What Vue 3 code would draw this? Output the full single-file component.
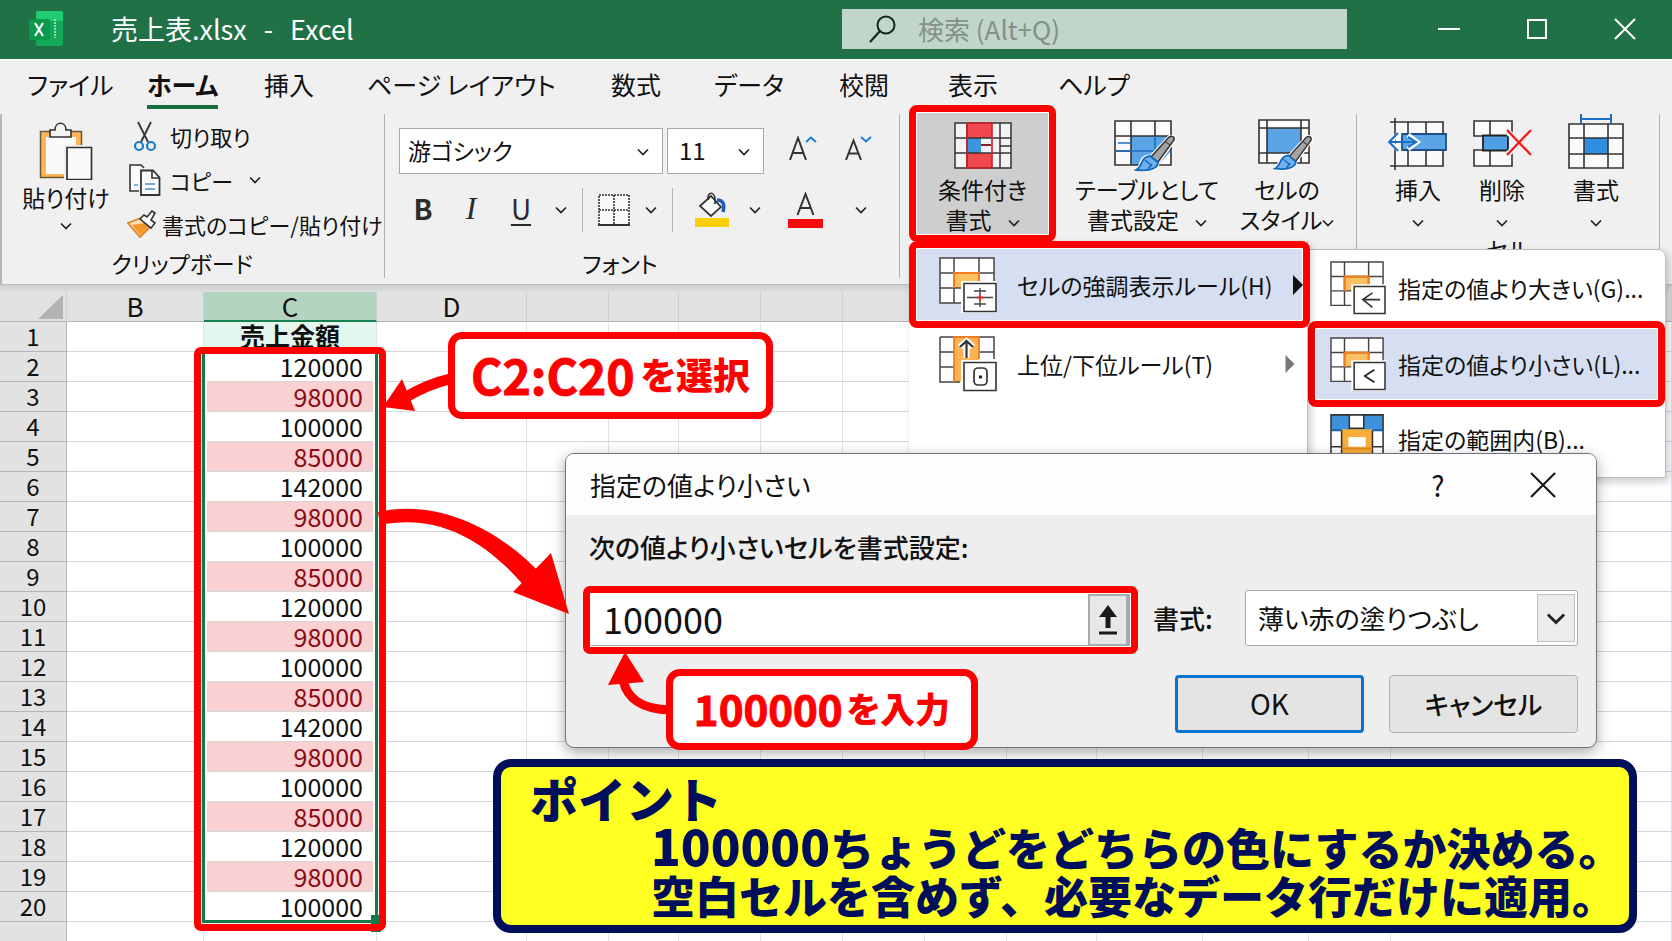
<script setup>
import { ref } from 'vue'

const tabs = ['ファイル', 'ホーム', '挿入', 'ページ レイアウト', '数式', 'データ', '校閲', '表示', 'ヘルプ']
const activeTab = ref('ホーム')

const amounts = [
  120000, 98000, 100000, 85000, 142000, 98000, 100000, 85000, 120000, 98000,
  100000, 85000, 142000, 98000, 100000, 85000, 120000, 98000, 100000,
]
const limit = ref('100000')
const fontName = ref('游ゴシック')
const fontSize = ref('11')
const fillStyle = ref('薄い赤の塗りつぶし')
const restColumns = 11
const isLow = (n) => n < Number(limit.value)
</script>

<template>
  <div class="app">
    <svg class="defs" aria-hidden="true">
      <symbol id="chev" viewBox="0 0 12 8"><path d="M1 1.5 6 6.5 11 1.5" fill="none" stroke="#222" stroke-width="1.7" /></symbol>
      <symbol id="brush" viewBox="0 0 42 37">
        <path d="M36 1.5c3-1.5 5 .5 4 3.500L24 27l-7-5z" fill="#a3a3a3" stroke="#fff" stroke-width="4" />
        <path d="M15 21l9 7c0 6-8 9-22 7.500 6-3 3-14 13-14.500z" fill="#6fb1ea" stroke="#fff" stroke-width="3" />
        <path d="M35 2c3-2 6 0 5 3L24 27l-7-5z" fill="#a3a3a3" stroke="#333" stroke-width="1.500" />
        <path d="M31 6.500l6 4" stroke="#444" stroke-width="1.200" />
        <path d="M16 21l8 6.500c0 6-9 9-22 7.500 7-3 4-13 14-14z" fill="#6fb1ea" stroke="#1467bd" stroke-width="1.800" />
        <path d="M11 25l7 6M14 34l4-5" stroke="#1467bd" stroke-width="1.400" fill="none" />
      </symbol>
      <symbol id="grid-orange" viewBox="0 0 58 56">
        <path d="M1 1h54v45H1z" fill="#fff" />
        <path d="M15 16h25v15H15z" fill="#fcc064" />
        <path d="M1 1h54v45H1zM15 1v45M40 1v45M1 16h54M1 31h54" fill="none" stroke="#444" stroke-width="1.500" />
        <path d="M15 31V16h25v10" fill="none" stroke="#f07c1e" stroke-width="2" />
        <path d="M22 24h36v32H22z" fill="#fff" />
        <path d="M25 26.500h32v28H25z" fill="#fff" stroke="#333" stroke-width="1.600" />
      </symbol>
    </svg>

    <header class="titlebar">
      <div class="brand">
        <svg class="logo" width="34" height="36" viewBox="0 0 34 36">
          <rect x="7" y="0" width="27" height="35" rx="2" fill="#13a85a" />
          <path d="M9 0h23a2 2 0 0 1 2 2v8H7V2a2 2 0 0 1 2-2z" fill="#22cc72" />
          <rect x="0" y="8" width="21" height="21" rx="2" fill="#0b9a4c" />
          <path d="M6 12l8 13M14 12 6 25" stroke="#fff" stroke-width="2.200" />
          <path d="M26 8v19" stroke="#8fe0b4" stroke-width="2" stroke-dasharray="2 1" />
        </svg>
        <h1><span>売上表.xlsx</span><span>-</span><span>Excel</span></h1>
      </div>
      <label class="search">
        <svg width="30" height="30" viewBox="0 0 30 30">
          <circle cx="18" cy="11" r="8.500" fill="none" stroke="#11291c" stroke-width="2" />
          <path d="M12 17 2 28" stroke="#11291c" stroke-width="2.200" />
        </svg>
        <input type="search" placeholder="検索 (Alt+Q)" aria-label="検索" />
      </label>
      <div class="window-buttons">
        <button type="button" aria-label="最小化"><svg width="24" height="24" viewBox="0 0 24 24"><path d="M1 12h22" stroke="#fff" stroke-width="2" /></svg></button>
        <button type="button" aria-label="最大化"><svg width="24" height="24" viewBox="0 0 24 24"><path d="M3 3h18v18H3z" fill="none" stroke="#fff" stroke-width="2" /></svg></button>
        <button type="button" aria-label="閉じる"><svg width="24" height="24" viewBox="0 0 24 24"><path d="M2 2l20 20M22 2 2 22" stroke="#fff" stroke-width="2" /></svg></button>
      </div>
    </header>

    <nav class="tabs">
      <button v-for="t in tabs" :key="t" type="button" :class="{ active: t === activeTab }" @click="activeTab = t">{{ t }}</button>
    </nav>

    <section class="ribbon">
      <div class="group clipboard">
        <div class="group-body">
          <button class="paste" type="button">
            <svg width="54" height="58" viewBox="0 0 54 58">
              <path d="M1.500 9.500h41v46h-41z" fill="#fdb557" stroke="#6b5636" stroke-width="1.500" />
              <path d="M7 15h30v37H7z" fill="#fafafa" />
              <path d="M11 15V8h5c0-9 11-9 11 0h5v7z" fill="#f4f4f4" stroke="#333" stroke-width="1.600" />
              <path d="M25 23h29v35H25z" fill="#f0f0f0" />
              <path d="M28 25.500h24.500v32H28z" fill="#fafafa" stroke="#333" stroke-width="1.700" />
            </svg>
            <span>貼り付け</span>
            <svg class="chev"><use href="#chev" /></svg>
          </button>
          <div class="clip-list">
            <button type="button">
              <svg width="43" height="32" viewBox="0 0 43 32">
                <path d="M11 2l10 20M24 2 14 22" stroke="#333" stroke-width="1.800" />
                <circle cx="12" cy="26" r="4" fill="none" stroke="#1b78d0" stroke-width="2.200" />
                <circle cx="24" cy="26" r="4" fill="none" stroke="#1b78d0" stroke-width="2.200" />
              </svg>切り取り
            </button>
            <button type="button">
              <svg width="43" height="32" viewBox="0 0 43 32">
                <path d="M12 27H3V1h11l3 3" fill="#fafafa" stroke="#333" stroke-width="1.600" />
                <path d="M14 6.500h12l6.500 7V31H14z" fill="#fafafa" stroke="#333" stroke-width="1.800" />
                <path d="M25 6v8h8" fill="none" stroke="#333" stroke-width="1.600" />
                <path d="M18 20h10M18 25h10" stroke="#4a90c8" stroke-width="1.500" />
                <path d="M7 21h4" stroke="#7bb8e0" stroke-width="2" />
              </svg>コピー<svg class="chev after"><use href="#chev" /></svg>
            </button>
            <button type="button">
              <svg width="35" height="28" viewBox="0 0 35 28">
                <path d="M1 13l13-5 9 9-10 10z" fill="#fbe0bb" stroke="#e08420" stroke-width="1.800" />
                <path d="M5 15l8 10 9-8-4-4z" fill="#f4962c" />
                <path d="M13 9l4-4 3 2 5-6 3 2-4 7 4 3-4 5z" fill="#fff" stroke="#333" stroke-width="1.600" />
              </svg>書式のコピー/貼り付け
            </button>
          </div>
        </div>
        <div class="group-label">クリップボード</div>
      </div>

      <div class="group font">
        <div class="group-body">
          <div class="font-row">
            <div class="pick name"><select v-model="fontName" aria-label="フォント"><option>游ゴシック</option></select><svg class="chev"><use href="#chev" /></svg></div>
            <div class="pick size"><select v-model="fontSize" aria-label="フォント サイズ"><option>11</option></select><svg class="chev"><use href="#chev" /></svg></div>
            <div class="grow-buttons">
              <button type="button" aria-label="フォント サイズの拡大">
                <svg width="30" height="26" viewBox="0 0 30 26"><path d="M2 24 10 2l8 22M5 17h10" fill="none" stroke="#333" stroke-width="2" /><path d="M18 6l5-4.500L28 6" fill="none" stroke="#1b7fd8" stroke-width="2" /></svg>
              </button>
              <button type="button" aria-label="フォント サイズの縮小">
                <svg width="30" height="26" viewBox="0 0 30 26"><path d="M2 24 9.500 4.500l7.500 19.500M5 17.500h9" fill="none" stroke="#333" stroke-width="2" /><path d="M17 1l5 4.500L27 1" fill="none" stroke="#1b7fd8" stroke-width="2" /></svg>
              </button>
            </div>
          </div>
          <div class="style-row">
            <button class="bold" type="button">B</button>
            <button class="italic" type="button">I</button>
            <button class="under" type="button">U</button>
            <button type="button" aria-label="下線の種類"><svg class="chev"><use href="#chev" /></svg></button>
            <i class="rule"></i>
            <button type="button" aria-label="罫線">
              <svg width="32" height="32" viewBox="0 0 32 32"><path d="M1 1h30v30H1z" fill="#fafafa" stroke="#333" stroke-width="1.600" stroke-dasharray="2 1" /><path d="M16 1v30M1 16h30" stroke="#333" stroke-width="1.600" stroke-dasharray="2 1" /><path d="M0 31h32" stroke="#333" stroke-width="2" /></svg>
            </button>
            <button type="button" aria-label="罫線の種類"><svg class="chev"><use href="#chev" /></svg></button>
            <i class="rule"></i>
            <button type="button" aria-label="塗りつぶしの色">
              <svg width="34" height="36" viewBox="0 0 34 36"><path d="M0 26h34v9H0z" fill="#f9cf0c" /><path d="M5 14 16 4l10 11-10 9z" fill="#fafafa" stroke="#333" stroke-width="1.700" /><path d="M13 8c-1-9 7-9 7 0v4" fill="none" stroke="#333" stroke-width="1.700" /><path d="M22 8c6 0 8 4 6 12" fill="none" stroke="#1d5fb4" stroke-width="3.500" /></svg>
            </button>
            <button type="button" aria-label="塗りつぶしの色の選択"><svg class="chev"><use href="#chev" /></svg></button>
            <button type="button" aria-label="フォントの色">
              <svg width="36" height="36" viewBox="0 0 36 36"><path d="M0 27h35v9H0z" fill="#f50d0d" /><path d="M9.500 23 17.500 2l8 21M12.500 16h10" fill="none" stroke="#333" stroke-width="2" /></svg>
            </button>
            <button type="button" aria-label="フォントの色の選択"><svg class="chev"><use href="#chev" /></svg></button>
          </div>
        </div>
        <div class="group-label">フォント</div>
      </div>

      <div class="group styles">
        <div class="group-body">
          <button class="big marked" type="button">
            <svg width="58" height="62" viewBox="0 -8 58 62">
              <path d="M1 1h56v45H1z" fill="#f3f3f3" />
              <path d="M13 1h25v15H13zM13 31h25v15H13z" fill="#f0484e" />
              <path d="M13 16h14v15H13z" fill="#3c96dc" />
              <path d="M1 1h56v45H1zM13 1v45M46 1v45M1 16h56M1 31h56M46 24h11" fill="none" stroke="#333" stroke-width="1.500" />
              <path d="M13 46V1M38 1v45M13 46h25M13 1h25" fill="none" stroke="#d51f26" stroke-width="1.600" />
              <path d="M27 23h10" stroke="#8a1f2a" stroke-width="2" />
            </svg>
            <span>条件付き</span>
            <span>書式<svg class="chev after"><use href="#chev" /></svg></span>
          </button>
          <button class="big" type="button">
            <svg width="68" height="62" viewBox="-1 -6 68 62">
              <path d="M1 1h56v44H1z" fill="#fafafa" />
              <path d="M17 16h40v15L44 45H17z" fill="#5ba5e6" />
              <path d="M1 1h56v44H1zM17 1v44M41 1v15M1 16h56M1 31h16" fill="none" stroke="#333" stroke-width="1.600" />
              <path d="M4 23h13M1 31h40M41 16v20" stroke="#1f6fc0" stroke-width="1.600" />
              <use href="#brush" x="20" y="15" width="42" height="37" />
            </svg>
            <span>テーブルとして</span>
            <span>書式設定<svg class="chev after"><use href="#chev" /></svg></span>
          </button>
          <button class="big" type="button">
            <svg width="58" height="62" viewBox="0 -5 58 62">
              <path d="M1 1h50v43H1z" fill="#fafafa" />
              <path d="M9 9h34v25H9z" fill="#5ba5e6" />
              <path d="M1 1h50v43H1zM9 1v43M43 1v43M1 9h50M1 34h50" fill="none" stroke="#333" stroke-width="1.600" />
              <use href="#brush" x="15" y="16" width="40" height="36" />
            </svg>
            <span>セルの</span>
            <span>スタイル<svg class="chev"><use href="#chev" /></svg></span>
          </button>
        </div>
      </div>

      <div class="group cells">
        <div class="group-body">
          <button class="big" type="button">
            <svg width="60" height="62" viewBox="0 -4 60 62">
              <path d="M2 4h53v44H7V4z" fill="#fafafa" />
              <path d="M2 4h53v44H2M7 0v52M20 4v44M38 4v44" fill="none" stroke="#333" stroke-width="1.600" />
              <path d="M14 16h44v16H14z" fill="#5ba5e6" stroke="#1d4f86" stroke-width="1.800" />
              <path d="M12 15 2 24l10 9M20 17l9 7-9 7" fill="none" stroke="#fff" stroke-width="5" />
              <path d="M10 15 1 24l9 9M1 24h27M20 19l8 5-8 5" fill="none" stroke="#1b6fc8" stroke-width="2.200" />
            </svg>
            <span>挿入</span><span><svg class="chev"><use href="#chev" /></svg></span>
          </button>
          <button class="big" type="button">
            <svg width="60" height="62" viewBox="-1 -6 60 62">
              <path d="M1 1h38v15H1zM1 30h38v16H1z" fill="#fafafa" stroke="#333" stroke-width="1.600" />
              <path d="M17 1v15M17 30v16" stroke="#333" stroke-width="1.600" />
              <path d="M10 15.500h25v15H10z" fill="#4f9fe4" stroke="#222" stroke-width="1.800" />
              <path d="M34 11l24 24M58 11 34 35" stroke="#f0f0f0" stroke-width="6" />
              <path d="M34 10l24 25M58 10 34 35" stroke="#f31818" stroke-width="2.200" />
            </svg>
            <span>削除</span><span><svg class="chev"><use href="#chev" /></svg></span>
          </button>
          <button class="big format" type="button">
            <svg width="56" height="62" viewBox="0 0 56 62">
              <path d="M1 10h54v44H1z" fill="#fafafa" />
              <path d="M16 24h24v16H16z" fill="#2e8fe0" />
              <path d="M1 10h54v44H1zM16 10v44M40 10v44M1 24h54M1 40h54" fill="none" stroke="#333" stroke-width="1.600" />
              <path d="M13 0v10M43 0v10M13 5h30" stroke="#1b6fc8" stroke-width="2" />
            </svg>
            <span>書式</span><span><svg class="chev"><use href="#chev" /></svg></span>
          </button>
        </div>
        <div class="group-label">セル</div>
      </div>
    </section>

    <main class="sheet">
      <table>
        <colgroup>
          <col class="c-num" /><col class="c-b" /><col class="c-c" /><col class="c-d" />
          <col class="c-80" /><col class="c-70" /><col class="c-80" /><col class="c-80" /><col class="c-80" /><col class="c-80" />
          <col class="c-90" /><col class="c-106" /><col class="c-106" /><col class="c-80" /><col />
        </colgroup>
        <thead>
          <tr>
            <th class="corner"><svg width="26" height="26" viewBox="0 0 26 26"><path d="M25 1v24H0z" fill="#b3b3b3" /></svg></th>
            <th>B</th><th class="picked">C</th><th>D</th>
            <th v-for="n in restColumns" :key="n"></th>
          </tr>
        </thead>
        <tbody>
          <tr>
            <th>1</th><td></td><td class="title">売上金額</td><td></td>
            <td v-for="n in restColumns" :key="n"></td>
          </tr>
          <tr v-for="(a, i) in amounts" :key="i">
            <th>{{ i + 2 }}</th><td></td><td class="amount" :class="{ low: isLow(a) }">{{ a }}</td><td></td>
            <td v-for="n in restColumns" :key="n"></td>
          </tr>
          <tr><th></th><td></td><td></td><td></td><td v-for="n in restColumns" :key="n"></td></tr>
        </tbody>
      </table>
    </main>

    <div class="selection"></div>
    <div class="selection-mark"></div>

    <div class="menu sub">
      <button type="button">
        <svg width="56" height="54" viewBox="0 0 58 56"><use href="#grid-orange" /><path d="M34 40h18M44 33l-10 7 10 8" fill="none" stroke="#333" stroke-width="1.700" /></svg>
        指定の値より大きい(G)...
      </button>
      <button class="marked" type="button">
        <svg width="56" height="54" viewBox="0 0 58 56"><use href="#grid-orange" /><path d="M46 34l-10 6.500 10 6.500" fill="none" stroke="#222" stroke-width="1.800" /></svg>
        指定の値より小さい(L)...
      </button>
      <button type="button">
        <svg width="56" height="54" viewBox="0 0 58 56">
          <path d="M1 3h54v50H1z" fill="#fff" />
          <path d="M1 3h19v16H1zM35 3h20v16H35z" fill="#3d92db" />
          <path d="M12 18h32v36H12z" fill="#fbad3a" />
          <path d="M19 26h18v10H19z" fill="#fff" />
          <path d="M1 54V3h54v51M12 19v34M44 19v34M1 36h11M44 36h11M20 3v14h15V3" fill="none" stroke="#333" stroke-width="1.600" />
          <path d="M1 19h11M44 19h11" stroke="#1d5fa8" stroke-width="2" />
          <path d="M12 38h32" stroke="#e18a1c" stroke-width="2" />
        </svg>
        指定の範囲内(B)...
      </button>
    </div>

    <div class="menu main">
      <button class="marked" type="button">
        <svg width="58" height="56" viewBox="0 0 58 56"><use href="#grid-orange" /><path d="M28 40.500h26M41 31v19M35 34h12M35 47h12" stroke="#444" stroke-width="1.400" /><path d="M38 40.500h6M41 37v7" stroke="#e23333" stroke-width="1.800" /></svg>
        セルの強調表示ルール(H)
        <svg class="arrow" width="10" height="20" viewBox="0 0 10 20"><path d="M0 0v20l10-10z" fill="#111" /></svg>
      </button>
      <button type="button">
        <svg width="58" height="56" viewBox="0 0 58 56">
          <path d="M1 1h54v45H1z" fill="#fff" />
          <path d="M15 1h25v45H15z" fill="#fbb254" />
          <path d="M1 1h54v22M1 1v45h20M1 16h14M40 16h15M1 31h14" fill="none" stroke="#444" stroke-width="1.500" />
          <path d="M15 46V1h25v22" fill="none" stroke="#f07c1e" stroke-width="1.800" />
          <path d="M27.500 22V5M21 11l6.500-6L34 11" fill="none" stroke="#fff" stroke-width="6" />
          <path d="M27.500 22V5M21 11l6.500-6L34 11" fill="none" stroke="#333" stroke-width="2.200" />
          <path d="M22 24h36v32H22z" fill="#fff" />
          <path d="M25 26.500h32v28H25z" fill="#fff" stroke="#333" stroke-width="1.600" />
          <rect x="35" y="32" width="13" height="17" rx="4" fill="none" stroke="#333" stroke-width="1.700" />
          <circle cx="41.500" cy="41" r="1.800" fill="#222" />
        </svg>
        上位/下位ルール(T)
        <svg class="arrow" width="10" height="18" viewBox="0 0 10 20"><path d="M0 0v20l10-10z" fill="#777" /></svg>
      </button>
    </div>

    <section class="dialog" role="dialog" aria-labelledby="dlg-title">
      <header>
        <h2 id="dlg-title">指定の値より小さい</h2>
        <button type="button" aria-label="ヘルプ">?</button>
        <button type="button" aria-label="閉じる"><svg width="28" height="28" viewBox="0 0 28 28"><path d="M2 2l24 24M26 2 2 26" stroke="#111" stroke-width="2" /></svg></button>
      </header>
      <div class="dialog-body">
        <label class="prompt" for="limit">次の値より小さいセルを書式設定:</label>
        <div class="fields">
          <div class="range">
            <input id="limit" v-model="limit" type="text" />
            <button type="button" aria-label="範囲の選択"><svg width="20" height="32" viewBox="0 0 20 32"><path d="M10 1l9 12h-6.500v11h-5V13H1z" fill="#1a1a1a" /><path d="M1 29h18" stroke="#1a1a1a" stroke-width="3" /></svg></button>
          </div>
          <label class="fill-label" for="fill">書式:</label>
          <div class="pick fill">
            <select id="fill" v-model="fillStyle"><option>薄い赤の塗りつぶし</option></select>
            <span class="drop"><svg width="20" height="13"><use href="#chev" /></svg></span>
          </div>
        </div>
        <div class="actions">
          <button class="ok" type="button">OK</button>
          <button type="button">キャンセル</button>
        </div>
      </div>
    </section>

    <svg class="arrows" width="700" height="740" viewBox="0 0 700 740" aria-hidden="true">
      <path d="M450 379Q428 384 406 397" fill="none" stroke="#f00" stroke-width="11" />
      <path d="M383 407 402 379 415 411z" fill="#f00" />
      <path d="M378 512C440 498 502 532 541 574L526 588C482 536 434 514 380 525z" fill="#f00" />
      <path d="M569 614 551 553 513 592z" fill="#f00" />
      <path d="M623 680C627 698 640 709 670 710" fill="none" stroke="#f00" stroke-width="9" />
      <path d="M625 652 608 685 644 682z" fill="#f00" />
    </svg>

    <p class="callout pick-range"><b>C2:C20</b>を選択</p>
    <p class="callout enter-value"><b>100000</b>を入力</p>

    <aside class="point">
      <h3>ポイント</h3>
      <p><b>100000</b>ちょうどをどちらの色にするか決める。</p>
      <p>空白セルを含めず、必要なデータ行だけに適用。</p>
    </aside>
  </div>
</template>

<style>
body { margin: 0; }
</style>

<style scoped>
.app {
  position: relative;
  display: flex;
  flex-direction: column;
  height: 100vh;
  overflow: hidden;
  background: #f0f0f0;
  color: #111;
  font-family: "Noto Sans CJK JP", "Noto Sans", sans-serif;
  font-size: 23px;
  font-feature-settings: "palt";
}
.app * { box-sizing: border-box; }
.defs { position: absolute; width: 0; height: 0; }
button, input, select { font: inherit; font-feature-settings: inherit; color: inherit; border: 0; background: none; padding: 0; margin: 0; }
h1, h2, h3, p { margin: 0; font-weight: 400; }
svg { flex: none; }
.chev { width: 12px; height: 8px; vertical-align: middle; }
.chev.after { margin-left: 16px; }

.titlebar {
  display: grid;
  grid-template-columns: 842px 1fr 325px;
  align-items: center;
  height: 60px;
  padding-bottom: 2px;
  background: #217147;
  border-bottom: 1px solid #fff;
  color: #fff;
}
.brand { display: flex; align-items: center; gap: 48px; padding-left: 29px; }
.brand h1 { display: flex; gap: 17px; font-size: 27px; line-height: 36px; font-feature-settings: normal; }
.search { display: flex; align-items: center; gap: 20px; height: 40px; padding-left: 26px; background: #bfd6c9; }
.search input { flex: 1; min-width: 0; outline: 0; font-size: 26px; }
.search input::placeholder { color: #85908a; opacity: 1; }
.window-buttons { display: flex; gap: 64px; padding-left: 90px; }
.window-buttons svg { display: block; }

.tabs {
  display: grid;
  grid-template-columns: 120px 117px 103px 244px 103px 125px 109px 110px 1fr;
  height: 54px;
  padding-left: 27px;
  font-size: 25px;
}
.tabs button { justify-self: start; height: 49px; border-bottom: 4px solid transparent; padding-top: 2px; white-space: nowrap; }
.tabs .active { font-weight: 700; border-color: #14703f; }

.ribbon { display: flex; height: 171px; border-left: 2px solid #b8b8b8; border-bottom: 1px solid #bcbcbc; line-height: 30px; }
.group { display: flex; flex-direction: column; height: 164px; border-right: 1px solid #b0b0b0; }
.group-body { height: 135px; }
.group-label { line-height: 28px; text-align: center; }
.clipboard { width: 383px; }
.clipboard .group-body { display: flex; gap: 16px; padding-left: 19px; }
.clipboard .group-label { padding-right: 22px; }
.paste { display: flex; flex-direction: column; align-items: center; width: 90px; padding-top: 8px; white-space: nowrap; }
.paste span { margin: 2px 0 10px; }
.clip-list { display: flex; flex-direction: column; font-size: 22px; }
.clip-list button { display: flex; align-items: center; height: 44px; white-space: nowrap; }

.font { width: 515px; }
.font .group-body { padding: 14px 0 0 14px; }
.font .group-label { padding-right: 44px; }
.font-row { display: flex; gap: 4px; }
.pick { position: relative; background: #fff; border: 1px solid #a9a9a9; }
.pick select { display: block; width: 100%; height: 100%; appearance: none; outline: 0; padding: 0 0 3px 8px; }
.pick .chev { position: absolute; right: 13px; top: 19px; pointer-events: none; }
.font-row .name { width: 264px; height: 46px; }
.font-row .size { width: 97px; height: 46px; }
.size select { padding-left: 11px; font-size: 24px; }
.grow-buttons { display: flex; padding-left: 7px; }
.grow-buttons button { width: 56px; }
.style-row { display: grid; grid-template-columns: 46px 50px 50px 30px 12px 52px 22px 20px 60px 26px 76px 34px; align-items: center; justify-items: center; height: 44px; margin-top: 14px; padding-left: 1px; color: #2b2b2b; font-size: 28px; }
.style-row svg { display: block; }
.style-row .bold, .style-row .under, .style-row .italic { height: 44px; padding-bottom: 4px; }
.style-row .bold { font-weight: 700; }
.style-row .italic { font-family: "Liberation Serif", serif; font-size: 32px; font-style: italic; }
.style-row .under { text-decoration: underline; text-decoration-thickness: 2px; text-underline-offset: 4px; }
.rule { width: 1px; height: 44px; background: #b4b4b4; }

.styles { width: 457px; }
.styles .group-body { display: grid; grid-template-columns: 147px 160px 116px; column-gap: 11px; padding-left: 9px; }
.styles .group-body > :last-child { margin-left: -18px; }
.big { display: flex; flex-direction: column; align-items: center; height: 126px; white-space: nowrap; }
.big svg + span { margin-top: -2px; }
.big span { height: 30px; }
.big.marked { height: 137px; margin-top: -9px; padding-top: 2px; background: #cecece; }
.marked { border: 7px solid #f00; border-radius: 8px; box-shadow: inset 0 0 0 1px #fff; }
.cells { width: 303px; }
.cells .group-body { display: flex; height: 121px; padding-left: 19px; }
.cells .big { width: 84px; }
.cells .format { margin-left: 10px; }

.sheet { flex: 1; min-height: 0; overflow: hidden; padding-top: 7px; background: linear-gradient(#cfcfcf, #dfdfdf 7px, #fff 7px); }
table { width: 100%; table-layout: fixed; border-spacing: 0; background: #fff; }
.c-num { width: 67px; } .c-b { width: 137px; } .c-c { width: 173px; } .c-d { width: 150px; }
.c-70 { width: 70px; } .c-80 { width: 82px; } .c-90 { width: 90px; } .c-106 { width: 106px; }
th, td { height: 30px; padding: 0; border-right: 1px solid #dfe2e6; border-bottom: 1px solid #d4d7da; line-height: 28px; vertical-align: top; }
th { background: #e2e2e2; font-weight: 400; font-size: 24px; border-right-color: #b4b4b4; border-bottom-color: #b4b4b4; }
thead th { border-right-color: #cfcfcf; font-size: 26px; line-height: 27px; }
.picked { background: #b4d4c2; border-bottom: 2px solid #1a7f4e; }
.corner { text-align: right; }
.corner svg { display: block; margin: 2px 2px 0 auto; }
.title { background: #e3f7ee; text-align: center; font-size: 25px; font-weight: 700; line-height: 26px; }
.amount { padding-right: 13px; text-align: right; font-size: 25px; font-feature-settings: normal; }
.low { background: #fbd0d3; color: #8b0a14; }

.selection { position: absolute; left: 202px; top: 350px; width: 176px; height: 573px; border: 3px solid #14794a; box-shadow: inset 0 0 0 2px #fff; }
.selection::after { content: ""; position: absolute; right: -6px; bottom: -12px; width: 10px; height: 17px; background: #14794a; }
.selection-mark { position: absolute; left: 194px; top: 347px; width: 192px; height: 584px; border: 7px solid #f00; border-radius: 7px; }

.menu { position: absolute; background: #fff; border: 1px solid #bdbdbd; box-shadow: 3px 4px 8px rgba(0, 0, 0, .2); line-height: 34px; }
.menu button { display: flex; align-items: center; white-space: nowrap; text-align: left; }
.menu .marked { background: #d5dff1; }
.menu.main { left: 909px; top: 241px; width: 399px; height: 230px; border-top: 0; border-left: 0; }
.menu.main button { width: 401px; height: 72px; gap: 20px; padding: 0 15px 0 30px; font-size: 23px; }
.menu.main .marked { height: 87px; padding: 0 8px 0 23px; }
.arrow { margin-left: auto; }
.menu.sub { left: 1307px; top: 249px; width: 359px; height: 229px; border-radius: 0 8px 0 0; }
.menu.sub button { width: 357px; height: 71px; gap: 12px; padding: 5px 0 0 22px; }
.menu.sub .marked { height: 86px; padding: 0 0 0 15px; }
.menu.sub button:last-child { height: 62px; padding-top: 2px; }

.dialog { position: absolute; left: 565px; right: 75px; top: 453px; border: 1px solid #70737a; border-radius: 9px; background: #eee; box-shadow: 0 4px 14px rgba(0, 0, 0, .35); overflow: hidden; font-size: 26px; }
.dialog header { display: flex; align-items: center; height: 61px; padding: 0 39px 0 24px; background: #fdfdfd; }
.dialog h2 { flex: 1; font-size: 26px; }
.dialog header button { display: flex; justify-content: center; width: 28px; font-size: 28px; }
.dialog header button + button { margin-left: 77px; }
.dialog-body { padding: 12px 18px 14px 17px; }
.prompt { display: block; padding-left: 6px; line-height: 40px; font-weight: 500; }
.fields { display: grid; grid-template-columns: 1fr 107px 333px; align-items: start; margin-top: 19px; }
.range { display: flex; height: 68px; border: 7px solid #f00; border-radius: 7px; background: #fff; padding: 1px; }
.range input { flex: 1; min-width: 0; outline: 0; padding: 0 0 3px 12px; border-bottom: 1px solid #aaa; font-size: 36px; line-height: 40px; font-feature-settings: normal; }
.range button { display: flex; align-items: center; justify-content: center; width: 42px; border: 2px solid #a8abae; border-right-width: 4px; background: #e8e8e8; }
.fill-label { padding-left: 15px; font-weight: 500; line-height: 64px; }
.fill { height: 56px; margin-top: 4px; border-radius: 3px; }
.fill select { padding-left: 12px; padding-bottom: 2px; }
.drop { position: absolute; right: 2px; top: 3px; bottom: 3px; display: flex; align-items: center; justify-content: center; width: 38px; border: 1px solid #c4c4c4; background: #ececec; pointer-events: none; }
.actions { display: flex; justify-content: flex-end; gap: 25px; margin-top: 21px; }
.actions button { width: 189px; height: 58px; padding-bottom: 2px; border: 1px solid #b3b3b3; border-radius: 4px; background: #e4e4e4; font-weight: 500; }
.actions .ok { border: 3px solid #0a73cf; font-size: 28px; font-weight: 400; }

.arrows { position: absolute; left: 0; top: 0; pointer-events: none; }
.callout { position: absolute; display: flex; align-items: center; justify-content: center; gap: 6px; padding-bottom: 4px; border: 7px solid #f00; border-radius: 14px; background: #fff; color: #f00; font-size: 37px; font-weight: 900; white-space: nowrap; }
.callout b { font-weight: 700; }
.pick-range { left: 448px; top: 332px; width: 325px; height: 87px; }
.pick-range b { font-size: 48px; -webkit-text-stroke: 1px #f00; }
.enter-value { gap: 4px; left: 666px; top: 669px; width: 312px; height: 81px; font-size: 35px; }
.enter-value b { font-size: 42px; -webkit-text-stroke: 1px #f00; }

.point { position: absolute; left: 493px; right: 35px; top: 759px; height: 174px; padding: 4px 0 0 29px; border: 8px solid #000f5c; border-radius: 18px; background: #ffff22; color: #000f5c; font-size: 44px; font-weight: 900; line-height: 48px; white-space: nowrap; font-feature-settings: normal; }
.point h3 { font-size: 48px; font-weight: 900; line-height: 52px; }
.point p { padding-left: 121px; font-weight: 900; }
.point b { font-size: 49px; font-weight: 900; line-height: 40px; }
</style>
